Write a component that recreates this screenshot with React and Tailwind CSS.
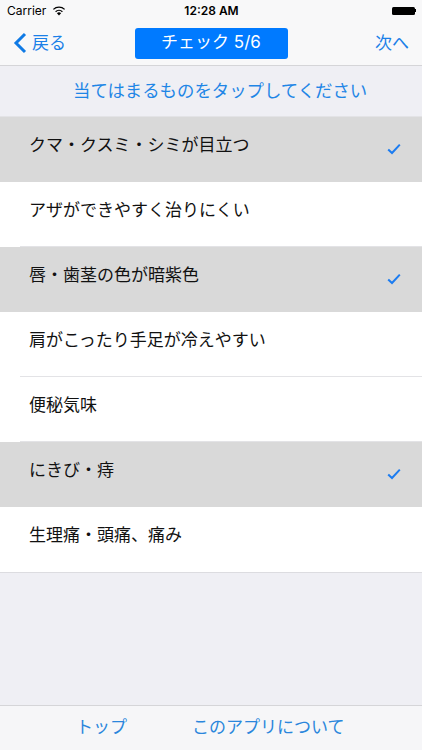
import React from 'react';

const ITEMS = [
    { label: 'クマ・クスミ・シミが目立つ', checked: true },
    { label: 'アザができやすく治りにくい', checked: false },
    { label: '唇・歯茎の色が暗紫色', checked: true },
    { label: '肩がこったり手足が冷えやすい', checked: false },
    { label: '便秘気味', checked: false },
    { label: 'にきび・痔', checked: true },
    { label: '生理痛・頭痛、痛み', checked: false },
];

const FONT = "font-['Inter','Noto_Sans_CJK_JP',sans-serif]";

function Wifi() {
    return (
        <svg width="14" height="10" viewBox="0 0 14 10" className="ml-[6px]">
            <path d="M7 9.6 L4.9 7.2 A3 3 0 0 1 9.1 7.2 Z" fill="#000" />
            <path d="M3.6 5.7 A5 5 0 0 1 10.4 5.7" fill="none" stroke="#000" strokeWidth="1.3" />
            <path d="M1.4 3.4 A8 8 0 0 1 12.6 3.4" fill="none" stroke="#000" strokeWidth="1.3" />
        </svg>
    );
}

function Row({ label, checked, last }) {
    return (
        <div className={`relative flex h-[65px] items-center pl-[29px] pr-[21px] ${checked ? 'bg-[#d9d9d9]' : 'bg-white'}`}>
            <span className="flex-1 -translate-y-[5px] text-[17px] leading-[22px] text-[#111]">{label}</span>
            {checked && (
                <svg width="14" height="12" viewBox="0 0 14 12" className="mt-[-2px]">
                    <path d="M1.2 6.4 L5 10 L12.8 1.6" fill="none" stroke="#1c7cf0" strokeWidth="2" />
                </svg>
            )}
            {!checked && !last && <div className="absolute bottom-0 left-[20px] right-0 h-px bg-[#e3e3e6]" />}
        </div>
    );
}

export default function App() {
    return (
        <div className={`${FONT} flex h-[750px] w-[422px] flex-col overflow-hidden bg-[#efeff4]`}>
            <div className="h-[66px] shrink-0 border-b border-[#d5d5d8] bg-[#f8f8f9]">
                <div className="flex h-[21px] items-center justify-between pl-[7px] pr-[6px]">
                    <div className="flex flex-1 items-center text-[12px] text-black">
                        <span>Carrier</span>
                        <Wifi />
                    </div>
                    <span className="text-[12px] font-semibold text-black">12:28 AM</span>
                    <div className="flex flex-1 items-center justify-end">
                        <div className="h-[8px] w-[23px] rounded-[1.5px] bg-black" />
                        <div className="h-[3px] w-[1.5px] bg-black" />
                    </div>
                </div>
                <div className="flex h-[44px] items-center justify-between">
                    <div className="flex w-[110px] items-center pl-[13px] text-[#1b80e8]">
                        <svg width="14" height="22" viewBox="0 0 14 22">
                            <path d="M12 2 L3 11 L12 20" fill="none" stroke="#0f7ae5" strokeWidth="3" />
                        </svg>
                        <span className="ml-[5px] text-[17px] leading-[22px]">戻る</span>
                    </div>
                    <div className="flex h-[31px] w-[153px] items-center justify-center rounded-[3px] bg-[#007aff] text-[17px] text-white">
                        チェック 5/6
                    </div>
                    <div className="flex w-[110px] justify-end pr-[13px] text-[17px] leading-[22px] text-[#1b80e8]">次へ</div>
                </div>
            </div>
            <div className="flex h-[50px] shrink-0 items-center pl-[73px] pt-[1px] text-[17.4px] text-[#1f86e6]">
                当てはまるものをタップしてください
            </div>
            <div className="shrink-0 border-t border-[#e3e3e6]">
                {ITEMS.map((item, i) => (
                    <Row key={i} label={item.label} checked={item.checked} last={i === ITEMS.length - 1} />
                ))}
            </div>
            <div className="h-px shrink-0 bg-[#dcdce0]" />
            <div className="flex-1" />
            <div className="flex h-[45px] shrink-0 items-center border-t border-[#d5d5d8] bg-[#f6f6f8] text-[17px] text-[#2a86dc]">
                <span className="ml-[76px]">トップ</span>
                <span className="ml-[65px]">このアプリについて</span>
            </div>
        </div>
    );
}
